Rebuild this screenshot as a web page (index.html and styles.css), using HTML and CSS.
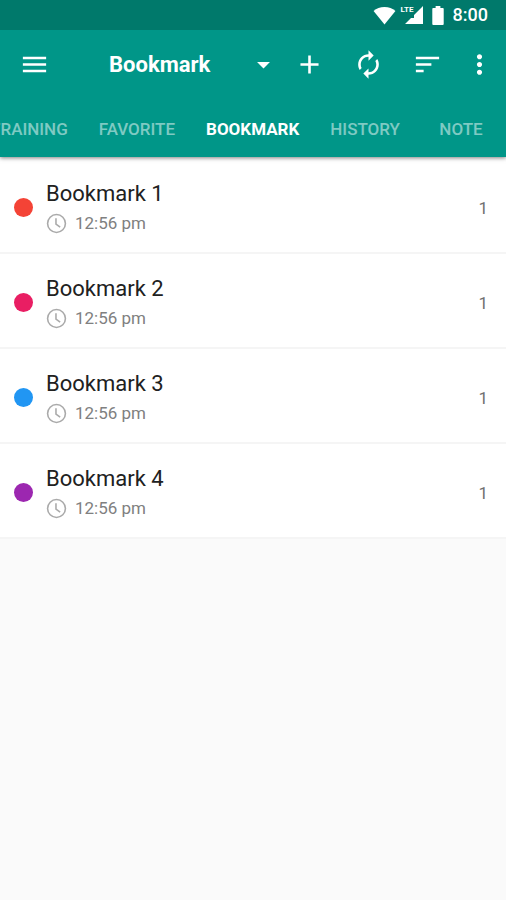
FILE: index.html
```html
<!DOCTYPE html>
<html lang="en">
    <head>
        <meta charset="utf-8">
        <meta name="viewport" content="width=device-width, initial-scale=1">
        <title>Bookmark</title>
        <link rel="stylesheet" href="styles.css">
    </head>
    <body>
        <header class="header">
            <div class="statusbar">
                <svg class="wifi" viewBox="0 0 24 20"><path d="M12 19.5 0.5 5.2C3.5 2.5 7.500 1 12 1s8.500 1.500 11.500 4.200z"/></svg>
                <span class="signal">
                    <span class="lte">LTE</span>
                    <svg viewBox="0 0 18 18"><path d="M18 0v18H0l6-6h3V9z"/></svg>
                </span>
                <svg class="battery" viewBox="0 0 12 20"><path d="M3.500 0h5v2H11q1 0 1 1v16q0 1-1 1H1q-1 0-1-1V3q0-1 1-1h2.500z"/></svg>
                <span class="clock">8:00</span>
            </div>
            <div class="toolbar">
                <button class="menu-btn" aria-label="Menu">
                    <svg viewBox="0 0 24 24"><path d="M3 18h18v-2H3v2zm0-5h18v-2H3v2zm0-7v2h18V6H3z"/></svg>
                </button>
                <div class="title">
                    <select aria-label="List">
                        <option>Bookmark</option>
                    </select>
                    <svg viewBox="0 0 24 24"><path d="M7 10l5 5 5-5z"/></svg>
                </div>
                <button class="icon-btn" aria-label="Add">
                    <svg viewBox="0 0 24 24"><path d="M19 13h-6v6h-2v-6H5v-2h6V5h2v6h6v2z"/></svg>
                </button>
                <button class="icon-btn" aria-label="Refresh">
                    <svg viewBox="0 0 24 24"><path d="M12 6v3l4-4-4-4v3c-4.420 0-8 3.580-8 8 0 1.570.46 3.030 1.240 4.260L6.700 14.800C6.250 13.970 6 13.010 6 12c0-3.310 2.690-6 6-6zm6.760 1.740L17.300 9.200c.44.84.7 1.790.7 2.800 0 3.310-2.690 6-6 6v-3l-4 4 4 4v-3c4.420 0 8-3.580 8-8 0-1.570-.46-3.030-1.240-4.260z"/></svg>
                </button>
                <button class="icon-btn" aria-label="Sort">
                    <svg viewBox="0 0 24 24"><path d="M3 18h6v-2H3v2zM3 6v2h18V6H3zm0 7h12v-2H3v2z"/></svg>
                </button>
                <button class="more-btn" aria-label="More">
                    <svg viewBox="0 0 24 24"><path d="M12 8c1.100 0 2-.9 2-2s-.9-2-2-2-2 .9-2 2 .9 2 2 2zm0 2c-1.100 0-2 .9-2 2s.9 2 2 2 2-.9 2-2-.9-2-2-2zm0 6c-1.100 0-2 .9-2 2s.9 2 2 2 2-.9 2-2-.9-2-2-2z"/></svg>
                </button>
            </div>
            <nav class="tabs">
                <a href="#training">TRAINING</a>
                <a href="#favorite">FAVORITE</a>
                <a class="active" href="#bookmark">BOOKMARK</a>
                <a href="#history">HISTORY</a>
                <a href="#note">NOTE</a>
            </nav>
        </header>
        <ul class="list">
            <li>
                <span class="dot red"></span>
                <div class="info">
                    <h2>Bookmark 1</h2>
                    <p><svg viewBox="0 0 20 20"><circle cx="10" cy="10" r="8.500"/><path d="M9.500 5v5.500l4 3"/></svg>12:56 pm</p>
                </div>
                <span class="count">1</span>
            </li>
            <li>
                <span class="dot pink"></span>
                <div class="info">
                    <h2>Bookmark 2</h2>
                    <p><svg viewBox="0 0 20 20"><circle cx="10" cy="10" r="8.500"/><path d="M9.500 5v5.500l4 3"/></svg>12:56 pm</p>
                </div>
                <span class="count">1</span>
            </li>
            <li>
                <span class="dot blue"></span>
                <div class="info">
                    <h2>Bookmark 3</h2>
                    <p><svg viewBox="0 0 20 20"><circle cx="10" cy="10" r="8.500"/><path d="M9.500 5v5.500l4 3"/></svg>12:56 pm</p>
                </div>
                <span class="count">1</span>
            </li>
            <li>
                <span class="dot purple"></span>
                <div class="info">
                    <h2>Bookmark 4</h2>
                    <p><svg viewBox="0 0 20 20"><circle cx="10" cy="10" r="8.500"/><path d="M9.500 5v5.500l4 3"/></svg>12:56 pm</p>
                </div>
                <span class="count">1</span>
            </li>
        </ul>
    </body>
</html>
```
FILE: styles.css
```css
* {
    box-sizing: border-box;
}

body {
    margin: 0;
    font-family: Roboto, "Liberation Sans", sans-serif;
    background-color: #fafafa;
}

.header {
    position: relative;
    background-color: #009688;
    color: white;
    box-shadow: 0 1px 4px rgba(0, 0, 0, 0.5);
}

.header svg {
    fill: white;
}

/* status bar */
.statusbar {
    display: flex;
    align-items: center;
    justify-content: flex-end;
    height: 30px;
    padding-right: 18px;
    background-color: #00796b;
}

.wifi {
    width: 23px;
    height: 19px;
}

.signal {
    display: flex;
    position: relative;
    width: 23px;
    margin-left: 4px;
    justify-content: flex-end;
}

.signal svg {
    width: 18px;
    height: 18px;
}

.lte {
    position: absolute;
    left: 1px;
    top: 0;
    font-size: 8px;
    line-height: 8px;
    font-weight: bold;
}

.battery {
    width: 12px;
    height: 19px;
    margin-left: 9px;
}

.clock {
    margin-left: 9px;
    font-size: 18px;
    line-height: 30px;
    font-weight: 500;
}

/* toolbar */
.toolbar {
    display: flex;
    align-items: center;
    height: 70px;
    padding: 0 4px 2px 0;
}

.toolbar button {
    display: flex;
    align-items: center;
    justify-content: center;
    height: 48px;
    padding: 0;
    border: none;
    background: none;
    cursor: pointer;
}

.toolbar svg {
    width: 31px;
    height: 31px;
}

.toolbar .menu-btn {
    width: 69px;
}

.toolbar .icon-btn {
    width: 59px;
}

.toolbar .more-btn {
    width: 45px;
}

.title {
    display: flex;
    align-items: center;
    position: relative;
    flex: 1;
    margin-left: 40px;
}

.title select {
    appearance: none;
    width: 100%;
    height: 48px;
    padding: 0;
    border: none;
    background: none;
    color: white;
    font-family: inherit;
    font-size: 22px;
    font-weight: bold;
}

.title option {
    color: black;
}

.title svg {
    position: absolute;
    right: 1px;
    pointer-events: none;
}

/* tabs */
.tabs {
    display: flex;
    justify-content: flex-end;
    gap: 1px;
    height: 57px;
    overflow: hidden;
}

.tabs a {
    flex-shrink: 0;
    min-width: 90px;
    padding: 0 15px;
    color: rgba(255, 255, 255, 0.5);
    font-size: 17px;
    line-height: 58px;
    font-weight: 500;
    text-align: center;
    text-decoration: none;
}

.tabs a.active {
    color: white;
    font-weight: bold;
}

/* bookmark list */
.list {
    margin: 0;
    padding: 2px 0 0;
    list-style: none;
    background-color: white;
}

.list li {
    display: flex;
    align-items: center;
    padding: 19px 18px 15px 14px;
    border-bottom: 2px solid #f5f5f5;
}

.dot {
    width: 19px;
    height: 19px;
    border-radius: 50%;
}

.red {
    background-color: #f44336;
}

.pink {
    background-color: #e91e63;
}

.blue {
    background-color: #2196f3;
}

.purple {
    background-color: #9c27b0;
}

.info {
    flex: 1;
    margin-left: 13px;
}

.info h2 {
    margin: 0;
    color: #212121;
    font-size: 22px;
    line-height: 32px;
    font-weight: normal;
}

.info p {
    display: flex;
    align-items: center;
    margin: 0;
    color: #808080;
    font-size: 17px;
    line-height: 27px;
}

.info svg {
    width: 21px;
    height: 21px;
    margin-right: 8px;
    fill: none;
    stroke: #aaaaaa;
    stroke-width: 1.5;
}

.count {
    color: #707070;
    font-size: 17px;
}
```
